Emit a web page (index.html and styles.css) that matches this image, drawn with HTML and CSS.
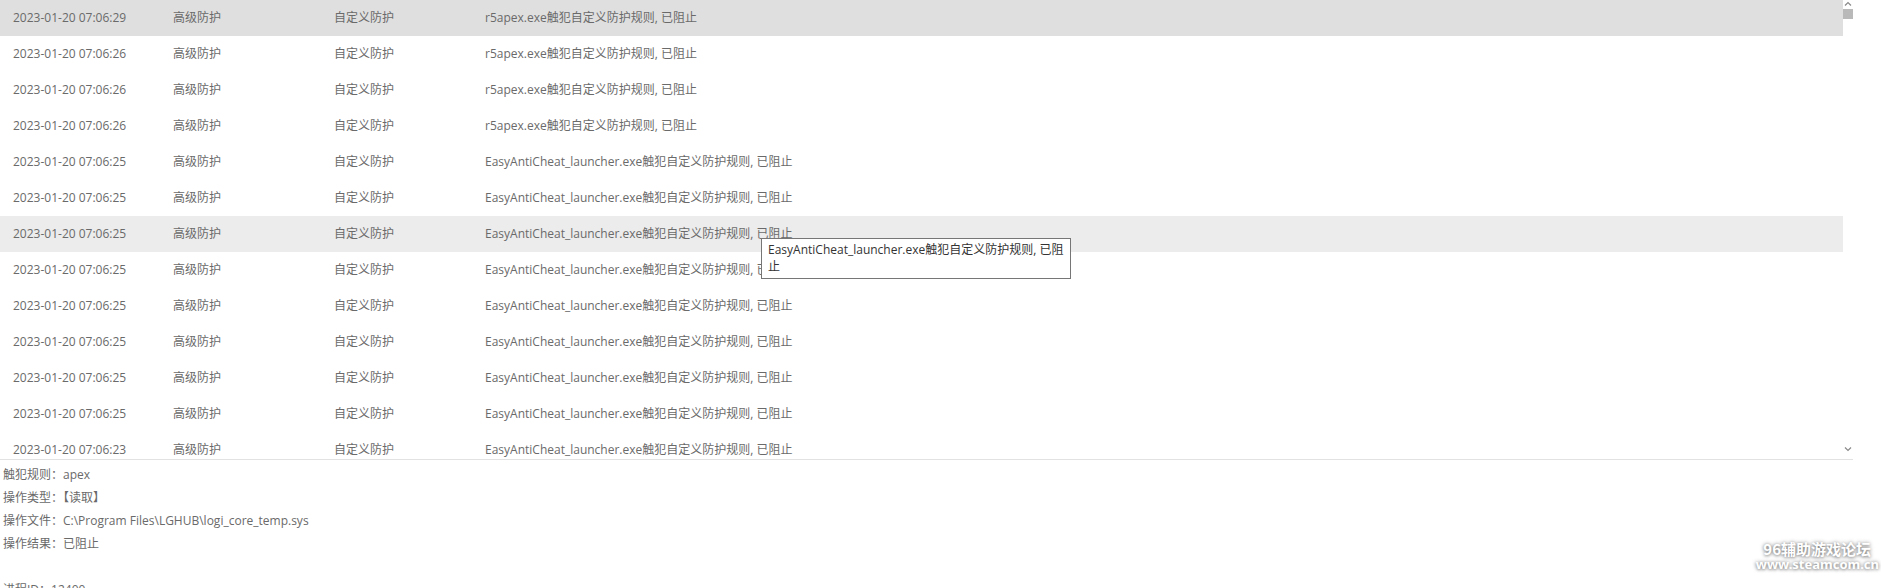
FILE: index.html
```html
<!DOCTYPE html>
<html lang="zh-CN">
<head>
<meta charset="utf-8">
<title>防护日志</title>
<link rel="stylesheet" href="styles.css">
</head>
<body>
<div class="page">
  <div class="list">
    <div class="rows">
      <div class="row selected"><span>2023-01-20 07:06:29</span><span>高级防护</span><span>自定义防护</span><span>r5apex.exe触犯自定义防护规则, 已阻止</span></div>
      <div class="row"><span>2023-01-20 07:06:26</span><span>高级防护</span><span>自定义防护</span><span>r5apex.exe触犯自定义防护规则, 已阻止</span></div>
      <div class="row"><span>2023-01-20 07:06:26</span><span>高级防护</span><span>自定义防护</span><span>r5apex.exe触犯自定义防护规则, 已阻止</span></div>
      <div class="row"><span>2023-01-20 07:06:26</span><span>高级防护</span><span>自定义防护</span><span>r5apex.exe触犯自定义防护规则, 已阻止</span></div>
      <div class="row"><span>2023-01-20 07:06:25</span><span>高级防护</span><span>自定义防护</span><span>EasyAntiCheat_launcher.exe触犯自定义防护规则, 已阻止</span></div>
      <div class="row"><span>2023-01-20 07:06:25</span><span>高级防护</span><span>自定义防护</span><span>EasyAntiCheat_launcher.exe触犯自定义防护规则, 已阻止</span></div>
      <div class="row hover"><span>2023-01-20 07:06:25</span><span>高级防护</span><span>自定义防护</span><span>EasyAntiCheat_launcher.exe触犯自定义防护规则, 已阻止</span></div>
      <div class="row"><span>2023-01-20 07:06:25</span><span>高级防护</span><span>自定义防护</span><span>EasyAntiCheat_launcher.exe触犯自定义防护规则, 已阻止</span></div>
      <div class="row"><span>2023-01-20 07:06:25</span><span>高级防护</span><span>自定义防护</span><span>EasyAntiCheat_launcher.exe触犯自定义防护规则, 已阻止</span></div>
      <div class="row"><span>2023-01-20 07:06:25</span><span>高级防护</span><span>自定义防护</span><span>EasyAntiCheat_launcher.exe触犯自定义防护规则, 已阻止</span></div>
      <div class="row"><span>2023-01-20 07:06:25</span><span>高级防护</span><span>自定义防护</span><span>EasyAntiCheat_launcher.exe触犯自定义防护规则, 已阻止</span></div>
      <div class="row"><span>2023-01-20 07:06:25</span><span>高级防护</span><span>自定义防护</span><span>EasyAntiCheat_launcher.exe触犯自定义防护规则, 已阻止</span></div>
      <div class="row"><span>2023-01-20 07:06:23</span><span>高级防护</span><span>自定义防护</span><span>EasyAntiCheat_launcher.exe触犯自定义防护规则, 已阻止</span></div>
    </div>
    <div class="scrollbar">
      <svg class="arrow" width="10" height="8" viewBox="0 0 10 8"><path d="M2 5.5 L5 2.5 L8 5.5" fill="none" stroke="#8a8a8a" stroke-width="1.2"/></svg>
      <div class="thumb"></div>
      <div class="track"></div>
      <svg class="arrow" width="10" height="8" viewBox="0 0 10 8"><path d="M2 2.5 L5 5.5 L8 2.5" fill="none" stroke="#8a8a8a" stroke-width="1.2"/></svg>
    </div>
    <div class="tooltip">EasyAntiCheat_launcher.exe触犯自定义防护规则, 已阻止</div>
  </div>
  <div class="detail">
    <div class="line">触犯规则：apex</div>
    <div class="line">操作类型：【读取】</div>
    <div class="line">操作文件：C:\Program Files\LGHUB\logi_core_temp.sys</div>
    <div class="line">操作结果：已阻止</div>
    <div class="line blank"></div>
    <div class="line">进程ID：12400</div>
  </div>
  <div class="watermark">
    <div class="wm-cn">96辅助游戏论坛</div>
    <div class="wm-en">www.steamcom.cn</div>
  </div>
</div>
</body>
</html>
```

FILE: styles.css
```css
html, body {
  margin: 0;
  padding: 0;
  background: #ffffff;
}

body {
  font-family: "Open Sans", "Noto Sans CJK SC", sans-serif;
  font-size: 12px;
  color: #6a6a6a;
  overflow: hidden;
}

.page {
  position: relative;
  width: 1881px;
  height: 588px;
  overflow: hidden;
}

.list {
  position: relative;
  width: 1853px;
  height: 459px;
  border-bottom: 1px solid #e2e2e2;
  display: flex;
}

.rows {
  flex: 1;
  overflow: hidden;
}

.row {
  box-sizing: border-box;
  height: 36px;
  padding-bottom: 2px;
  display: grid;
  grid-template-columns: 160px 161px 151px 1fr;
  align-items: center;
  padding-left: 13px;
  white-space: nowrap;
}

.row.selected {
  background: #dfdfdf;
}

.row.hover {
  background: #ececec;
}

.scrollbar {
  width: 10px;
  display: flex;
  flex-direction: column;
  align-items: center;
}

.arrow {
  display: block;
  flex: none;
}

.thumb {
  width: 10px;
  height: 10px;
  background: #b9b9b9;
  flex: none;
  margin-top: 1px;
}

.track {
  flex: 1;
}

.scrollbar .arrow:last-child {
  margin-bottom: 6px;
}

.tooltip {
  position: absolute;
  left: 761px;
  top: 238px;
  width: 296px;
  padding: 2px 6px 3px 6px;
  border: 1px solid #767676;
  background: #ffffff;
  color: #333333;
  line-height: 17px;
  box-sizing: content-box;
}

.detail {
  padding: 3px 0 0 3px;
  line-height: 23px;
}

.line.blank {
  height: 23px;
}

.watermark {
  position: absolute;
  right: 2px;
  bottom: 16px;
  color: #ffffff;
  font-family: "Noto Sans CJK SC", sans-serif;
  font-weight: bold;
  text-align: right;
  text-shadow: 0 0 4px rgba(0, 0, 0, 0.45), 0 1px 3px rgba(0, 0, 0, 0.3);
}

.wm-cn {
  font-size: 15px;
  line-height: 17px;
  padding-right: 8px;
}

.wm-en {
  font-family: "Noto Sans", sans-serif;
  font-size: 13px;
  line-height: 15px;
}
```
